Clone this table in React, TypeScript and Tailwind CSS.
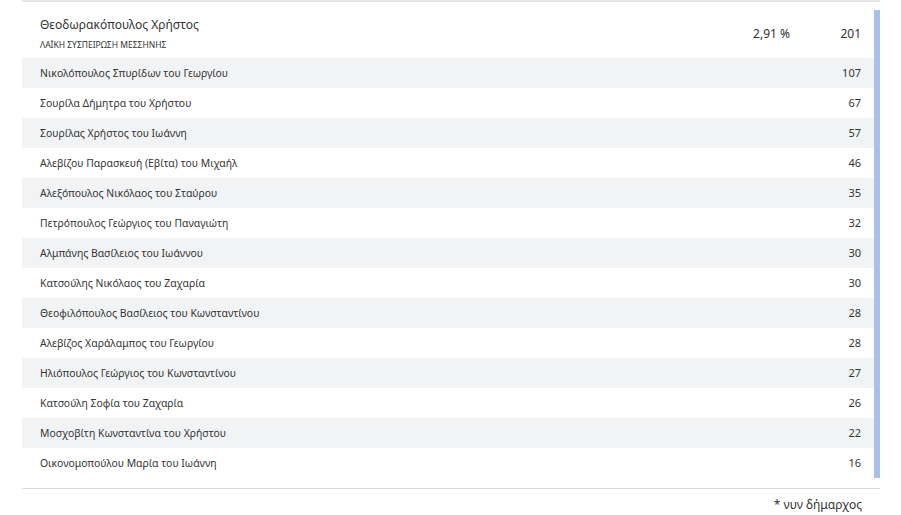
import React from 'react';

const ROWS: [string, number][] = [
  ["Νικολόπουλος Σπυρίδων του Γεωργίου", 107],
  ["Σουρίλα Δήμητρα του Χρήστου", 67],
  ["Σουρίλας Χρήστος του Ιωάννη", 57],
  ["Αλεβίζου Παρασκευή (Εβίτα) του Μιχαήλ", 46],
  ["Αλεξόπουλος Νικόλαος του Σταύρου", 35],
  ["Πετρόπουλος Γεώργιος του Παναγιώτη", 32],
  ["Αλμπάνης Βασίλειος του Ιωάννου", 30],
  ["Κατσούλης Νικόλαος του Ζαχαρία", 30],
  ["Θεοφιλόπουλος Βασίλειος του Κωνσταντίνου", 28],
  ["Αλεβίζος Χαράλαμπος του Γεωργίου", 28],
  ["Ηλιόπουλος Γεώργιος του Κωνσταντίνου", 27],
  ["Κατσούλη Σοφία του Ζαχαρία", 26],
  ["Μοσχοβίτη Κωνσταντίνα του Χρήστου", 22],
  ["Οικονομοπούλου Μαρία του Ιωάννη", 16],
];

const App: React.FC = () => {
  return (
    <div className="w-[901px] h-[515px] bg-white text-[#333] overflow-hidden" style={{ fontFamily: '"Noto Sans", "Open Sans", sans-serif' }}>
      <div className="ml-[22px] w-[858px]">
        <div className="h-[2px] bg-[#e6e6e6]" />
        <div className="flex mt-[8px]">
          <div className="flex-1">
            {/* list leader */}
            <div className="h-[48px] flex items-start pl-[18px] pr-[13px]">
              <div className="flex-1 pt-[6px]">
                <div className="text-[12px] leading-[18px]">Θεοδωρακόπουλος Χρήστος</div>
                <div className="text-[8.5px] leading-[12px] mt-[5px] uppercase">ΛΑΪΚΗ ΣΥΣΠΕΙΡΩΣΗ ΜΕΣΣΗΝΗΣ</div>
              </div>
              <div className="w-[80px] pt-[16px] text-[12px] leading-[16px] text-right pr-[11px]">2,91 %</div>
              <div className="w-[60px] pt-[16px] text-[12px] leading-[16px] text-right">201</div>
            </div>
            {ROWS.map(([name, votes], i) => (
              <div
                key={name}
                className={`h-[30px] flex items-center pl-[18px] pr-[13px] text-[11px] ${i % 2 === 0 ? 'bg-[#f2f3f5]' : 'bg-white'}`}
              >
                <div className="flex-1 text-[10.4px] pt-[2px]">{name}</div>
                <div className="w-[60px] text-right">{votes}</div>
              </div>
            ))}
          </div>
          <div className="w-[6px] bg-[#a9c1e8]" />
        </div>
        <div className="h-[1px] bg-[#dcdcdc] mt-[10px]" />
        <div className="text-right text-[12px] pr-[18px] mt-[7px]">* νυν δήμαρχος</div>
      </div>
    </div>
  );
};

export default App;
